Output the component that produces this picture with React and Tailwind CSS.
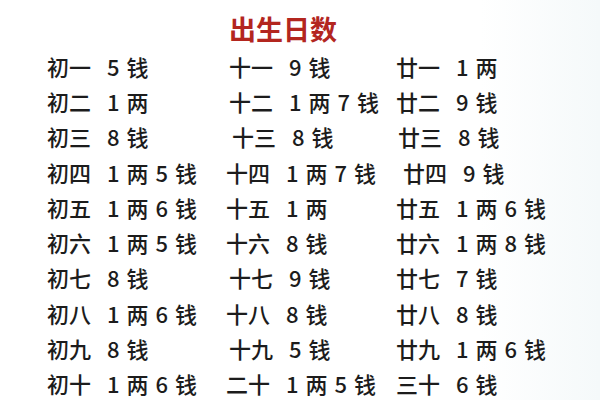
import React from "react";

const rows = [
    [["初一", "5钱"], ["十一", "9钱", "ml-[3px]"], ["廿一", "1两"]],
    [["初二", "1两"], ["十二", "1两7钱", "ml-[3px]"], ["廿二", "9钱"]],
    [["初三", "8钱"], ["十三", "8钱", "ml-[6px]"], ["廿三", "8钱", "ml-[2px]"]],
    [["初四", "1两5钱"], ["十四", "1两7钱"], ["廿四", "9钱", "ml-[7px]"]],
    [["初五", "1两6钱"], ["十五", "1两"], ["廿五", "1两6钱"]],
    [["初六", "1两5钱"], ["十六", "8钱"], ["廿六", "1两8钱"]],
    [["初七", "8钱"], ["十七", "9钱", "ml-[3px]"], ["廿七", "7钱"]],
    [["初八", "1两6钱"], ["十八", "8钱"], ["廿八", "8钱"]],
    [["初九", "8钱"], ["十九", "5钱", "ml-[3px]"], ["廿九", "1两6钱"]],
    [["初十", "1两6钱"], ["二十", "1两5钱"], ["三十", "6钱"]],
];

const Cell = ({ label, value, shift = "" }) => (
    <div className={`flex items-center ${shift}`}>
        <span className="w-[44px] shrink-0">{label}</span>
        <span className="ml-[16px] flex items-center gap-[7px]">
            {value.split("").map((t, i) => (
                <span key={i}>{t}</span>
            ))}
        </span>
    </div>
);

export default function App() {
    return (
        <div
            className="h-[400px] w-[600px] overflow-hidden bg-gradient-to-r from-white from-80% to-[#f5f9fa] pt-[12px] text-[#1c1c1c]"
            style={{ fontFamily: '"Noto Sans CJK SC", "Noto Sans", sans-serif' }}
        >
            <h1 className="ml-[229px] h-[36px] text-[27px] font-bold leading-[34px] text-[#b3261f]">出生日数</h1>
            <div className="pl-[47px] text-[22px] font-medium">
                {rows.map((r, i) => (
                    <div key={i} className="grid h-[35.3px] grid-cols-[179px_170px_1fr] items-center leading-none">
                        {r.map(([label, value, shift], j) => (
                            <Cell key={j} label={label} value={value} shift={shift} />
                        ))}
                    </div>
                ))}
            </div>
        </div>
    );
}
